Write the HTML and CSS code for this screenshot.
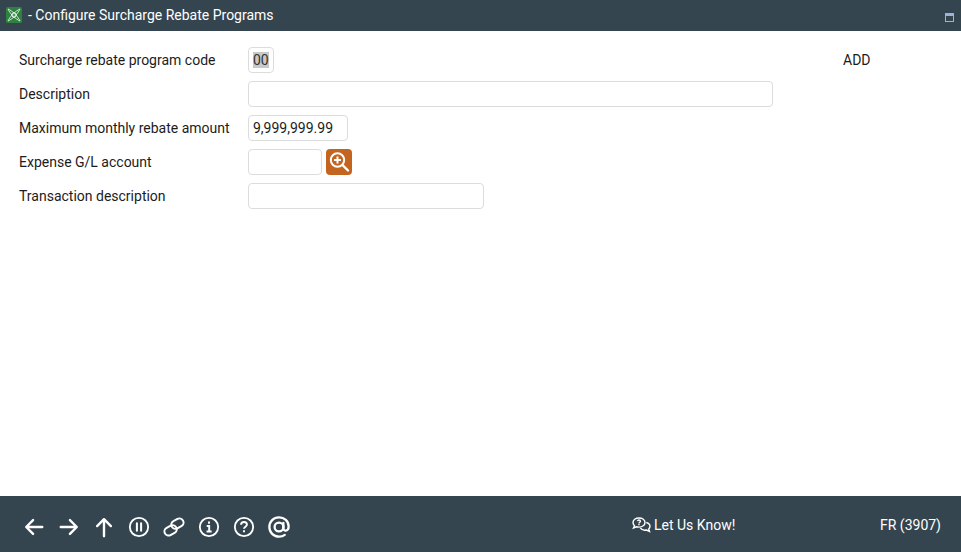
FILE: index.html
```html
<!DOCTYPE html>
<html lang="en">
<head>
<meta charset="utf-8">
<title>Configure Surcharge Rebate Programs</title>
<link rel="stylesheet" href="styles.css">
</head>
<body>
<div class="app">
  <header class="titlebar">
    <svg class="logo" viewBox="0 0 16 16" width="16" height="16">
      <rect width="16" height="16" rx="1.500" fill="#2f8140"/>
      <g fill="none" stroke="#d5ead9" stroke-width="1">
        <path d="M2 2C6 3.500 12.500 10 14 14M14 2C10 3.500 3.500 10 2 14"/>
        <path d="M2 2C3.500 6 10 12.500 14 14M14 2C12.500 6 6 12.500 2 14"/>
        <path d="M5 8 8 5 11 8 8 11Z"/>
      </g>
    </svg>
    <span class="title">- Configure Surcharge Rebate Programs</span>
    <span class="winbtn"></span>
  </header>

  <main class="form">
    <div class="row">
      <label class="label">Surcharge rebate program code</label>
      <div class="field w-code"><span class="selected">00</span></div>
      <span class="mode">ADD</span>
    </div>
    <div class="row">
      <label class="label">Description</label>
      <div class="field w-desc"></div>
    </div>
    <div class="row">
      <label class="label">Maximum monthly rebate amount</label>
      <div class="field w-amt">9,999,999.99</div>
    </div>
    <div class="row">
      <label class="label">Expense G/L account</label>
      <div class="field w-acct"></div>
      <button class="lookup" type="button" aria-label="Look up">
        <svg viewBox="0 0 26 26" width="26" height="26" fill="none" stroke="#fff">
          <circle cx="11.500" cy="11" r="6.700" stroke-width="2"/>
          <path d="M11.500 7.500v7M8 11h7" stroke-width="2"/>
          <path d="M16.500 16 22 21.500" stroke-width="2.400" stroke-linecap="round"/>
        </svg>
      </button>
    </div>
    <div class="row">
      <label class="label">Transaction description</label>
      <div class="field w-trans"></div>
    </div>
  </main>

  <footer class="footer">
    <nav class="tools">
      <svg class="tool" viewBox="0 0 24 24" fill="none" stroke="#fff" stroke-width="2.600" stroke-linecap="round" stroke-linejoin="round"><path d="M21 12H4M11 4.500 3.500 12l7.500 7.500"/></svg>
      <svg class="tool" viewBox="0 0 24 24" fill="none" stroke="#fff" stroke-width="2.600" stroke-linecap="round" stroke-linejoin="round"><path d="M3 12h17M13 4.500l7.500 7.500-7.500 7.500"/></svg>
      <svg class="tool" viewBox="0 0 24 24" fill="none" stroke="#fff" stroke-width="2.600" stroke-linecap="round" stroke-linejoin="round"><path d="M12 22V4M4.500 11 12 3.500l7.500 7.500"/></svg>
      <svg class="tool" viewBox="0 0 24 24" fill="none" stroke="#fff" stroke-width="2"><circle cx="12" cy="12" r="10"/><path d="M9.700 8v8M14.300 8v8" stroke-width="2.200" stroke-linecap="round"/></svg>
      <svg class="tool" viewBox="0 0 24 24" fill="none" stroke="#fff" stroke-width="2.200"><g transform="rotate(-28 12 12)"><rect x="0" y="9" width="14" height="9" rx="4.500"/><rect x="10" y="6" width="14" height="9" rx="4.500"/></g></svg>
      <svg class="tool" viewBox="0 0 24 24" fill="none" stroke="#fff" stroke-width="2"><circle cx="12" cy="12" r="10"/><path d="M12 6v2.500M9.500 11H12.200V17M9.300 17h5.600" stroke-width="2.100"/></svg>
      <svg class="tool" viewBox="0 0 24 24" fill="none" stroke="#fff" stroke-width="2"><circle cx="12" cy="12" r="10"/><path d="M8.800 9.500C8.800 7.600 10.300 6.500 12 6.500s3.200 1 3.200 2.800c0 2.400-3.200 2.400-3.200 4.700M12 15.500v2.200" stroke-width="2.100"/></svg>
      <svg class="tool" viewBox="0 0 24 24" fill="none" stroke="#fff" stroke-width="2.500" stroke-linecap="round"><circle cx="12" cy="12" r="4.800"/><path d="M16.800 7.500v6c0 3.500 5.700 3.500 5.700-2C22.500 5.500 17.800 1.500 12 1.500 6 1.500 1.500 6 1.500 12S6 22.500 12 22.500c2.500 0 4.700-.7 6.300-1.900"/></svg>
    </nav>
    <div class="feedback">
      <svg class="chat" viewBox="0 0 19 16" width="19" height="16" fill="none" stroke="#fff" stroke-width="1.400">
        <path d="M7 1C3.500 1 1 3 1 5.500c0 1.500 1 2.700 1.500 3.200L1.500 11l3-1.200c.8.200 1.700.3 2.500.3 3.300 0 6-2 6-4.600S10.500 1 7 1Z"/>
        <path d="M14.300 5.500c2 .6 3.700 2 3.700 3.800 0 1.200-.6 2-1.300 2.700l.8 2.500-3-1.500c-2.500.5-5-.4-6.200-2.200"/>
        <path d="M5.500 4.200C5.700 3.300 6.300 3 7 3s1.400.4 1.400 1.200C8.400 5.200 7 5.200 7 6.400M7 7v1.200"/>
      </svg>
      <span>Let Us Know!</span>
    </div>
    <div class="status">FR (3907)</div>
  </footer>
</div>
</body>
</html>
```

FILE: styles.css
```css
* { box-sizing: border-box; }

html, body {
  margin: 0;
  height: 100%;
}

body {
  font-family: Roboto, "Liberation Sans", sans-serif;
  font-size: 14px;
  color: #1c1c1c;
  background: #fff;
}

.app {
  display: flex;
  flex-direction: column;
  height: 552px;
  overflow: hidden;
}

.titlebar {
  flex: none;
  display: flex;
  align-items: center;
  height: 31px;
  padding: 0 7px 1px 6px;
  background: #34454f;
  color: #fff;
}

.logo { flex: none; }

.title {
  margin-left: 6px;
  font-size: 14px;
}

.winbtn {
  margin-left: auto;
  margin-top: 5px;
  width: 9px;
  height: 9px;
  border: 1px solid #9db4d6;
  border-top-width: 3px;
  background: #34454f;
}

.form {
  flex: 1;
  display: flex;
  flex-direction: column;
  gap: 8px;
  padding: 16px 0 0 19px;
}

.row {
  position: relative;
  display: flex;
  align-items: center;
  height: 26px;
}

.label {
  flex: none;
  width: 229px;
}

.field {
  flex: none;
  display: flex;
  align-items: center;
  height: 26px;
  padding: 0 4px;
  border: 1px solid #dcdcdc;
  border-radius: 4px;
  background: #fff;
}

.w-code { width: 26px; }
.w-desc { width: 525px; }
.w-amt { width: 100px; }
.w-acct { width: 74px; }
.w-trans { width: 236px; }

.selected {
  background: #c8c8c8;
  color: #333;
}

.mode {
  margin-left: 569px;
}

.lookup {
  flex: none;
  width: 26px;
  height: 26px;
  margin-left: 4px;
  padding: 0;
  border: 0;
  border-radius: 4px;
  background: #c4651f;
}

.lookup svg { display: block; }

.footer {
  flex: none;
  display: flex;
  align-items: center;
  height: 56px;
  padding: 0 20px 0 23px;
  background: #34454f;
  color: #fff;
}

.tools {
  display: flex;
  gap: 13px;
  align-items: center;
  margin-top: 6px;
}

.tool {
  display: block;
  width: 22px;
  height: 22px;
}

.feedback {
  display: flex;
  align-items: center;
  gap: 3px;
  margin-left: 342px;
  margin-top: 2px;
}

.status {
  margin-left: auto;
  margin-top: 2px;
}
```
